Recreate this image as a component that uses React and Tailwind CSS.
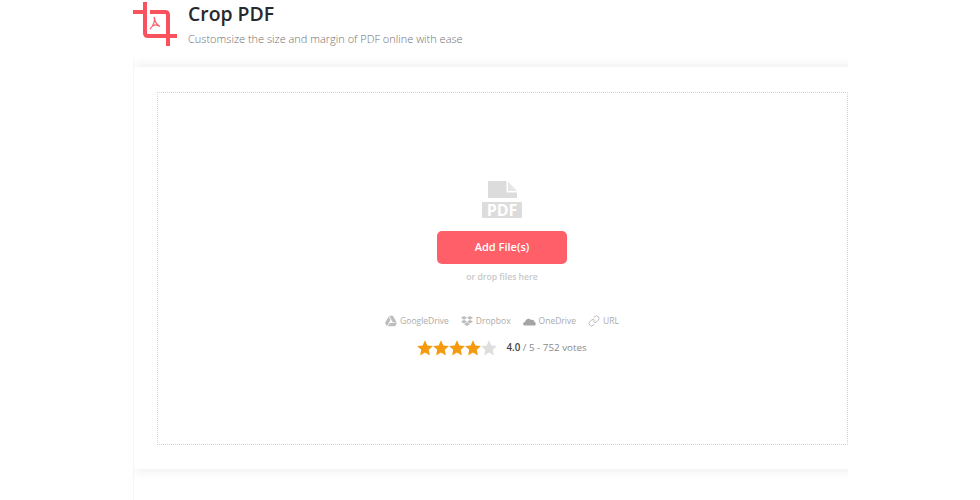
import React from "react";
import { FaGoogleDrive, FaDropbox } from "react-icons/fa";
import { Link } from "lucide-react";

function CropIcon() {
  return (
    <svg width="45" height="47" viewBox="0 0 45 47" className="block">
      <path d="M0 12h10 M12 2v31q0 3 3 3h29 M17 12h15q3 0 3 3v31" fill="none" stroke="#f8525f" strokeWidth="4" />
      <path d="M21 17c1.200 3 0 8-4 12M18.500 27c2-2.500 5.500-2.500 8.500-.500M21.500 17c-.5 3 1.500 7.500 5.500 9.500" fill="none" stroke="#f8626d" strokeWidth="1.200" />
    </svg>
  );
}

function PdfIcon() {
  return (
    <svg width="40" height="37" viewBox="0 0 40 37" className="block overflow-visible">
      <path d="M6 0h18.500v11.500H35V17H6z" fill="#dcdcdc" />
      <path d="M26 0.500l9 9.500h-9z" fill="#e6e6e6" />
      <rect x="0" y="21" width="40" height="16" fill="#dcdcdc" />
      <text x="20" y="34.500" textAnchor="middle" fontFamily="'Open Sans', sans-serif" fontWeight="700" fontSize="16" fill="#fff">PDF</text>
    </svg>
  );
}

const Star = ({ c }) => (
  <svg width="16" height="16" viewBox="0 0 24 24" className="block">
    <path d="M12 .3l3.500 7.900 8.400 .9-6.300 5.700 1.800 8.400-7.400-4.300-7.400 4.300 1.800-8.400L.1 9.100l8.400-.9z" fill={c} />
  </svg>
);

function Source({ icon, label }) {
  return (
    <span className="flex items-center gap-[3px]">
      {icon}
      <span>{label}</span>
    </span>
  );
}

export default function App() {
  return (
    <div className="w-[980px] h-[500px] overflow-hidden bg-white font-['Open_Sans',sans-serif]">
      <div className="ml-[133px] w-[715px]">
        <header className="h-[57px] flex">
          <CropIcon />
          <div className="ml-[10px]">
            <h1 className="text-[19.400px] leading-[27px] font-semibold text-[#26292e]">Crop PDF</h1>
            <p className="mt-[4px] text-[11px] leading-[16px] font-light text-[#707070]">Customsize the size and margin of PDF online with ease</p>
          </div>
        </header>
        <div className="h-[443px] overflow-hidden border-l border-[#f6f6f6] pt-[10px]">
          <main className="w-[780px] h-[402px] bg-white shadow-[0_0_12px_rgba(0,0,0,0.09)] pt-[25px] pl-[23px]">
            <div className="w-[691px] h-[353px] border border-dotted border-[#d4d4d4] flex flex-col items-center pt-[88px] pr-[1px]">
              <PdfIcon />
              <button className="mt-[13px] w-[130px] h-[33px] rounded-[5px] bg-[#ff5f68] text-white text-[11px] font-semibold">Add File(s)</button>
              <p className="mt-[7px] text-[8.600px] leading-[12px] font-semibold text-[#c8c8c8]">or drop files here</p>
              <div className="mt-[32px] flex items-center gap-[12px] text-[8.500px] leading-[12px] text-[#ababab]">
                <Source label="GoogleDrive" icon={<FaGoogleDrive size={12} color="#bdbdbd" />} />
                <Source label="Dropbox" icon={<FaDropbox size={12} color="#bdbdbd" />} />
                <Source label="OneDrive" icon={<svg width="13" height="9" viewBox="0 0 26 18"><path d="M2 17c-3-2-2-7 2-7 1-6 8-9 12-4 4-2 7 1 7 4 3 1 3 6 1 7z" fill="#a4a4a4" /></svg>} />
                <Source label="URL" icon={<Link size={12} color="#b0b0b0" strokeWidth={1.700} />} />
              </div>
              <div className="mt-[13px] flex items-center">
                <div className="flex">
                  <Star c="#f59a0f" /><Star c="#f59a0f" /><Star c="#f59a0f" /><Star c="#f59a0f" /><Star c="#dedede" />
                </div>
                <p className="ml-[9px] text-[9.800px] leading-[14px] text-[#8a8a8a]"><span className="font-semibold text-[#444]">4.0</span> / 5 - 752 votes</p>
              </div>
            </div>
          </main>
        </div>
      </div>
    </div>
  );
}
